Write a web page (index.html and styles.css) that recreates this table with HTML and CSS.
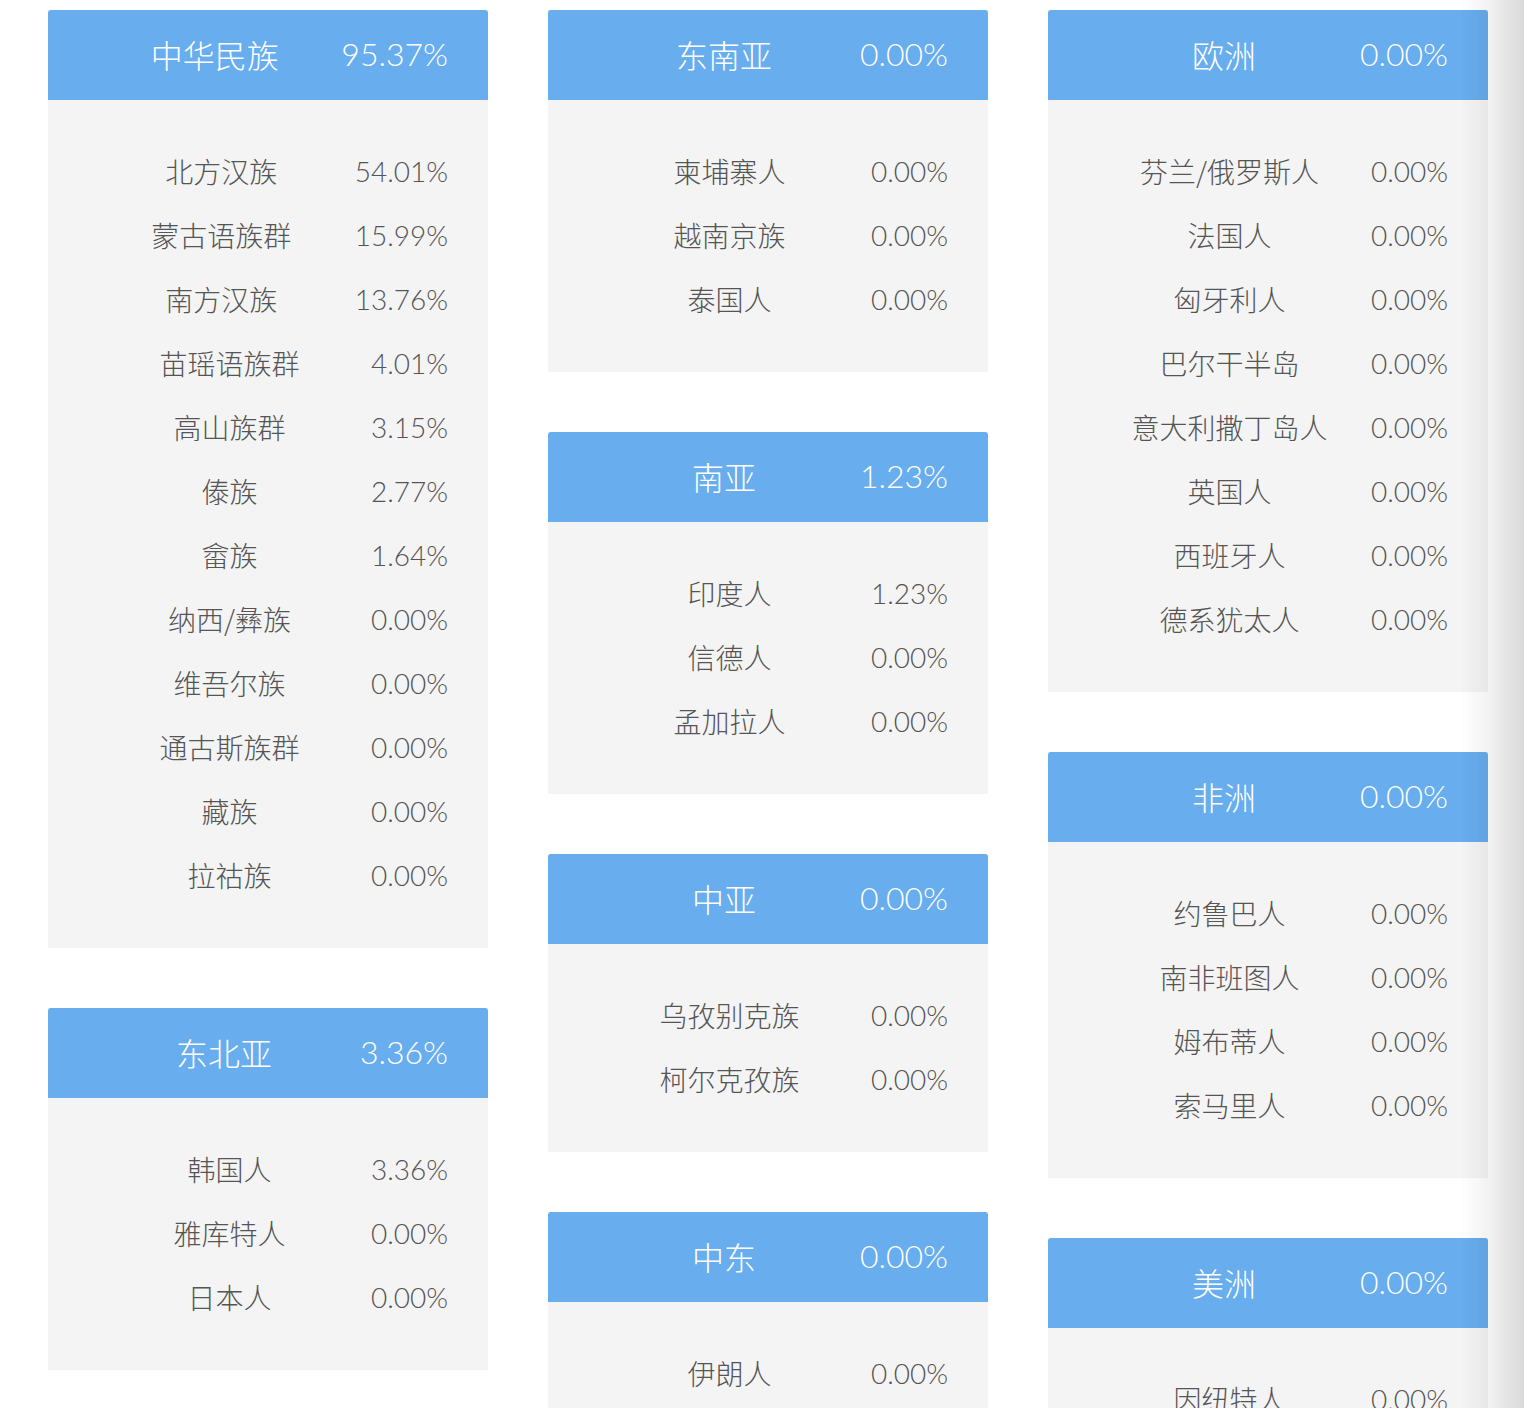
FILE: index.html
```html
<!DOCTYPE html>
<html lang="zh">
<head>
<meta charset="utf-8">
<link rel="stylesheet" href="styles.css">
</head>
<body>
<div class="page">
  <div class="col">
    <div class="card">
      <div class="head"><span class="name">中华民族</span><span class="pct">95.37%</span></div>
      <div class="body">
        <div class="row"><span class="name">北方汉族</span><span class="pct">54.01%</span></div>
        <div class="row"><span class="name">蒙古语族群</span><span class="pct">15.99%</span></div>
        <div class="row"><span class="name">南方汉族</span><span class="pct">13.76%</span></div>
        <div class="row"><span class="name">苗瑶语族群</span><span class="pct">4.01%</span></div>
        <div class="row"><span class="name">高山族群</span><span class="pct">3.15%</span></div>
        <div class="row"><span class="name">傣族</span><span class="pct">2.77%</span></div>
        <div class="row"><span class="name">畲族</span><span class="pct">1.64%</span></div>
        <div class="row"><span class="name">纳西/彝族</span><span class="pct">0.00%</span></div>
        <div class="row"><span class="name">维吾尔族</span><span class="pct">0.00%</span></div>
        <div class="row"><span class="name">通古斯族群</span><span class="pct">0.00%</span></div>
        <div class="row"><span class="name">藏族</span><span class="pct">0.00%</span></div>
        <div class="row"><span class="name">拉祜族</span><span class="pct">0.00%</span></div>
      </div>
    </div>
    <div class="card">
      <div class="head"><span class="name">东北亚</span><span class="pct">3.36%</span></div>
      <div class="body">
        <div class="row"><span class="name">韩国人</span><span class="pct">3.36%</span></div>
        <div class="row"><span class="name">雅库特人</span><span class="pct">0.00%</span></div>
        <div class="row"><span class="name">日本人</span><span class="pct">0.00%</span></div>
      </div>
    </div>
  </div>
  <div class="col">
    <div class="card">
      <div class="head"><span class="name">东南亚</span><span class="pct">0.00%</span></div>
      <div class="body">
        <div class="row"><span class="name">柬埔寨人</span><span class="pct">0.00%</span></div>
        <div class="row"><span class="name">越南京族</span><span class="pct">0.00%</span></div>
        <div class="row"><span class="name">泰国人</span><span class="pct">0.00%</span></div>
      </div>
    </div>
    <div class="card">
      <div class="head"><span class="name">南亚</span><span class="pct">1.23%</span></div>
      <div class="body">
        <div class="row"><span class="name">印度人</span><span class="pct">1.23%</span></div>
        <div class="row"><span class="name">信德人</span><span class="pct">0.00%</span></div>
        <div class="row"><span class="name">孟加拉人</span><span class="pct">0.00%</span></div>
      </div>
    </div>
    <div class="card">
      <div class="head"><span class="name">中亚</span><span class="pct">0.00%</span></div>
      <div class="body">
        <div class="row"><span class="name">乌孜别克族</span><span class="pct">0.00%</span></div>
        <div class="row"><span class="name">柯尔克孜族</span><span class="pct">0.00%</span></div>
      </div>
    </div>
    <div class="card">
      <div class="head"><span class="name">中东</span><span class="pct">0.00%</span></div>
      <div class="body">
        <div class="row"><span class="name">伊朗人</span><span class="pct">0.00%</span></div>
      </div>
    </div>
  </div>
  <div class="col">
    <div class="card">
      <div class="head"><span class="name">欧洲</span><span class="pct">0.00%</span></div>
      <div class="body">
        <div class="row"><span class="name">芬兰/俄罗斯人</span><span class="pct">0.00%</span></div>
        <div class="row"><span class="name">法国人</span><span class="pct">0.00%</span></div>
        <div class="row"><span class="name">匈牙利人</span><span class="pct">0.00%</span></div>
        <div class="row"><span class="name">巴尔干半岛</span><span class="pct">0.00%</span></div>
        <div class="row"><span class="name">意大利撒丁岛人</span><span class="pct">0.00%</span></div>
        <div class="row"><span class="name">英国人</span><span class="pct">0.00%</span></div>
        <div class="row"><span class="name">西班牙人</span><span class="pct">0.00%</span></div>
        <div class="row"><span class="name">德系犹太人</span><span class="pct">0.00%</span></div>
      </div>
    </div>
    <div class="card">
      <div class="head"><span class="name">非洲</span><span class="pct">0.00%</span></div>
      <div class="body">
        <div class="row"><span class="name">约鲁巴人</span><span class="pct">0.00%</span></div>
        <div class="row"><span class="name">南非班图人</span><span class="pct">0.00%</span></div>
        <div class="row"><span class="name">姆布蒂人</span><span class="pct">0.00%</span></div>
        <div class="row"><span class="name">索马里人</span><span class="pct">0.00%</span></div>
      </div>
    </div>
    <div class="card">
      <div class="head"><span class="name">美洲</span><span class="pct">0.00%</span></div>
      <div class="body">
        <div class="row"><span class="name">因纽特人</span><span class="pct">0.00%</span></div>
      </div>
    </div>
  </div>
</div>
<div class="edge"></div>
</body>
</html>
```
FILE: styles.css
```css
html, body {
  margin: 0;
  padding: 0;
  background: #ffffff;
  overflow: hidden;
}
body {
  font-family: Lato, "Noto Sans CJK SC", sans-serif;
  font-weight: 300;
}
.page {
  display: flex;
  gap: 60px;
  padding: 10px 0 0 48px;
  align-items: flex-start;
}
.col {
  width: 440px;
  display: flex;
  flex-direction: column;
  gap: 60px;
}
.card {
  background: #f4f4f4;
}
.head {
  height: 90px;
  box-sizing: border-box;
  background: #68adee;
  border-radius: 3px 3px 0 0;
  color: #ffffff;
  display: flex;
  align-items: center;
  padding: 0 40px 3px;
  font-size: 32px;
}
.body {
  padding: 40px 0;
}
.row {
  height: 64px;
  box-sizing: border-box;
  display: flex;
  align-items: center;
  padding: 0 40px 2px;
  font-size: 28px;
  color: #555555;
}
.name {
  flex: 1;
  text-align: center;
  font-family: "Noto Sans CJK SC", sans-serif;
  font-weight: 300;
}
.pct {
  font-family: Lato, sans-serif;
  font-weight: 300;
}
.edge {
  position: fixed;
  top: 0;
  right: 0;
  width: 64px;
  height: 100%;
  background: linear-gradient(to right, rgba(0,0,0,0) 0%, rgba(0,0,0,0.05) 45%, rgba(0,0,0,0.15) 100%);
  pointer-events: none;
}
```
